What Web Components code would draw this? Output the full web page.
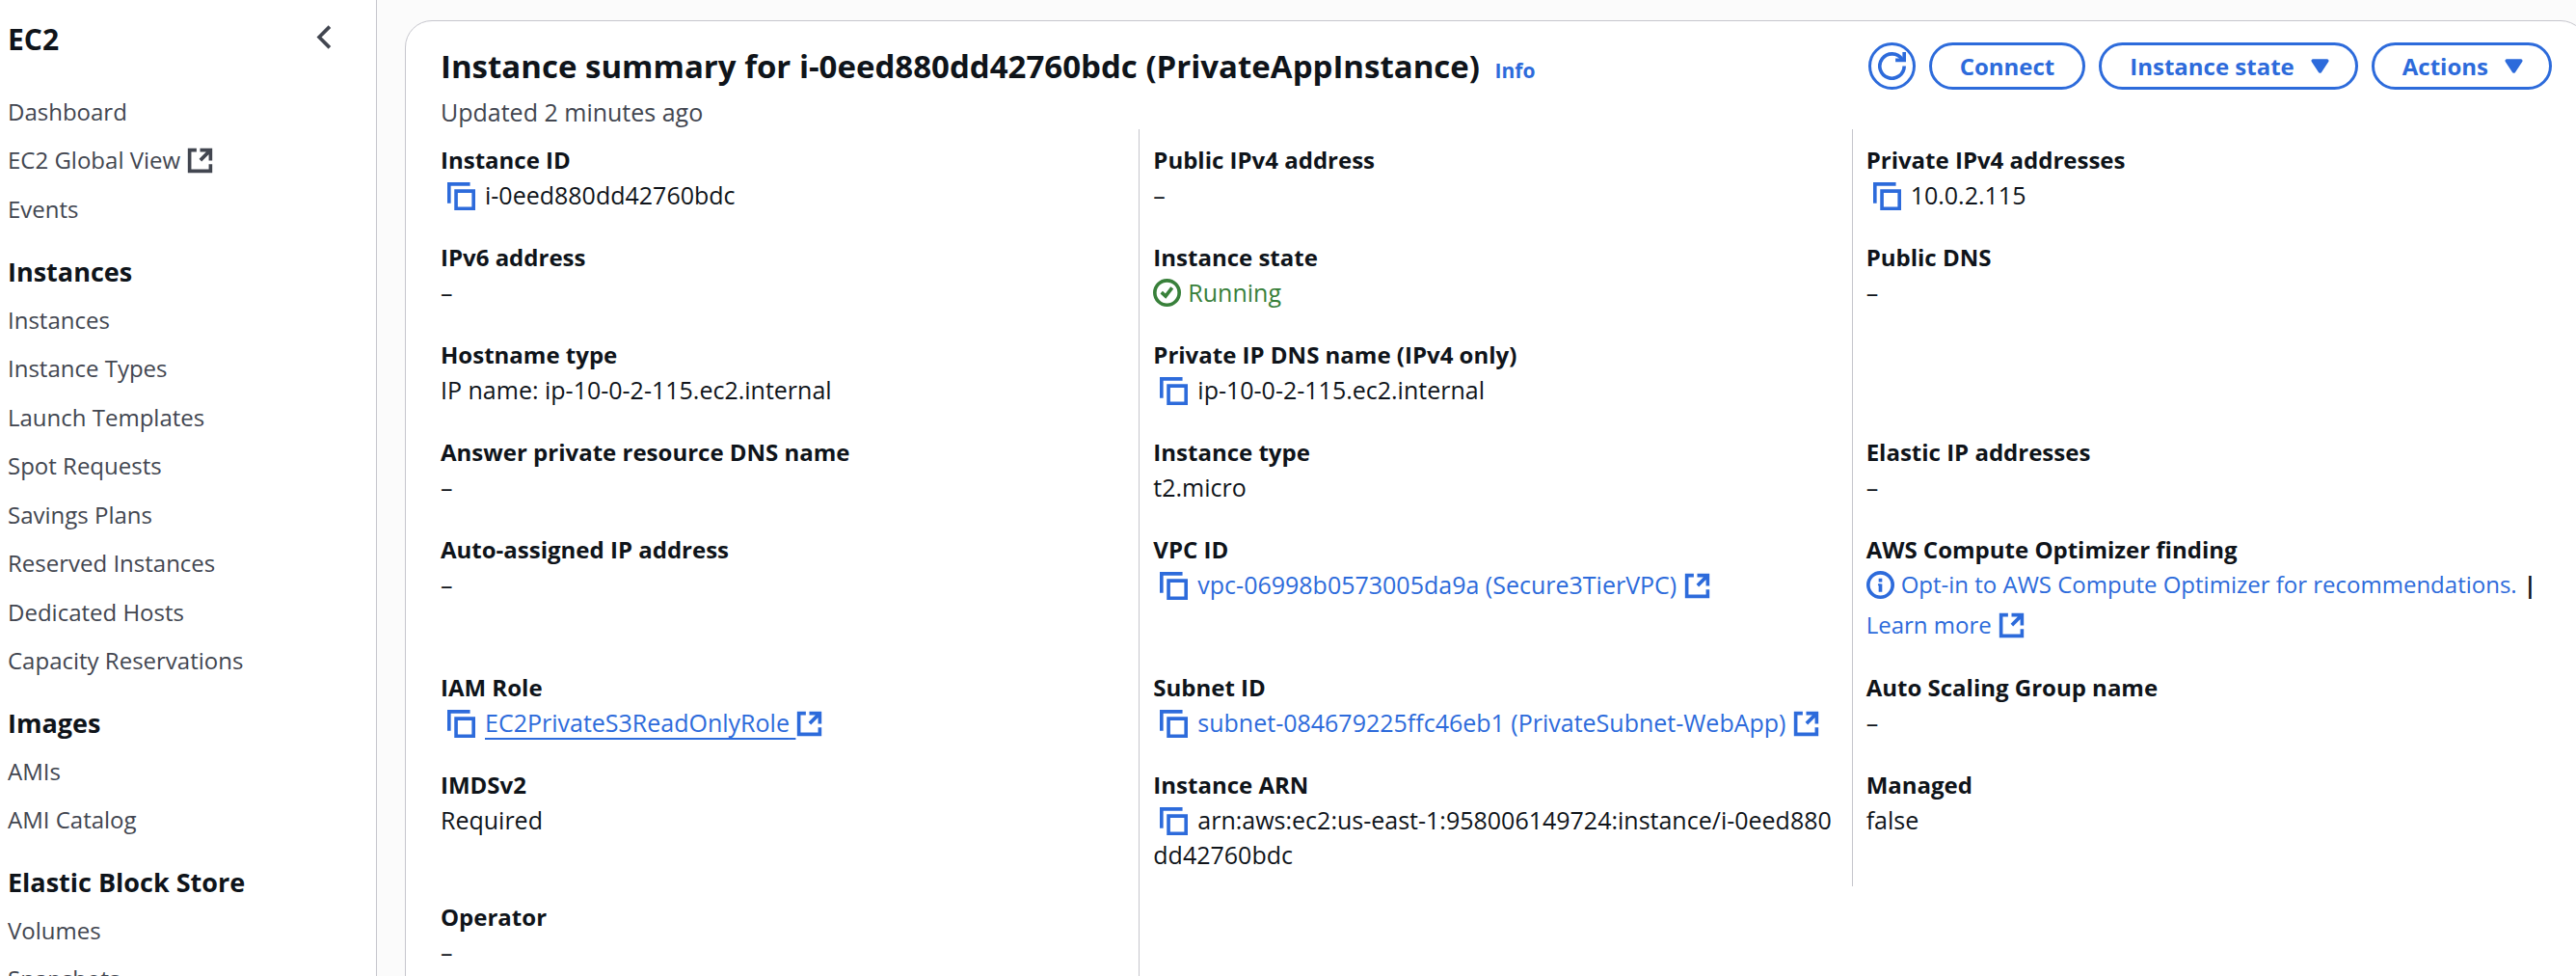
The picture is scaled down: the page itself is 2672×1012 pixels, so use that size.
<!DOCTYPE html>
<html lang="en">
<head>
<meta charset="utf-8">
<title>Instance details | EC2</title>
<style>
  :root {
    --blue: #2d6bdb;
    --green: #38803a;
    --ink: #0f141a;
    --muted: #424650;
    --line: #c6c6cd;
  }
  body {
    margin: 0;
    font: 500 24px/36px "Open Sans", "Noto Sans", sans-serif;
    color: var(--ink);
    background: #fff;
  }
</style>
</head>
<body>
<app-shell>
  <side-nav slot="nav" heading="EC2">
    <nav-section>
      <nav-link>Dashboard</nav-link>
      <nav-link external>EC2 Global View</nav-link>
      <nav-link>Events</nav-link>
    </nav-section>
    <nav-section heading="Instances">
      <nav-link>Instances</nav-link>
      <nav-link>Instance Types</nav-link>
      <nav-link>Launch Templates</nav-link>
      <nav-link>Spot Requests</nav-link>
      <nav-link>Savings Plans</nav-link>
      <nav-link>Reserved Instances</nav-link>
      <nav-link>Dedicated Hosts</nav-link>
      <nav-link>Capacity Reservations</nav-link>
    </nav-section>
    <nav-section heading="Images">
      <nav-link>AMIs</nav-link>
      <nav-link>AMI Catalog</nav-link>
    </nav-section>
    <nav-section heading="Elastic Block Store">
      <nav-link>Volumes</nav-link>
      <nav-link>Snapshots</nav-link>
    </nav-section>
  </side-nav>

  <summary-card>
    <span slot="title">Instance summary for i-0eed880dd42760bdc (PrivateAppInstance)</span>
    <span slot="description">Updated 2 minutes ago</span>
    <action-button slot="actions" round label="Refresh"><ui-icon name="refresh"></ui-icon></action-button>
    <action-button slot="actions">Connect</action-button>
    <action-button slot="actions" menu>Instance state</action-button>
    <action-button slot="actions" menu>Actions</action-button>

    <info-field label="Instance ID"><copy-button></copy-button>i-0eed880dd42760bdc</info-field>
    <info-field label="Public IPv4 address">–</info-field>
    <info-field label="Private IPv4 addresses"><copy-button></copy-button>10.0.2.115</info-field>

    <info-field label="IPv6 address">–</info-field>
    <info-field label="Instance state"><state-text>Running</state-text></info-field>
    <info-field label="Public DNS">–</info-field>

    <info-field label="Hostname type">IP name: ip-10-0-2-115.ec2.internal</info-field>
    <info-field label="Private IP DNS name (IPv4 only)"><copy-button></copy-button>ip-10-0-2-115.ec2.internal</info-field>
    <info-field></info-field>

    <info-field label="Answer private resource DNS name">–</info-field>
    <info-field label="Instance type">t2.micro</info-field>
    <info-field label="Elastic IP addresses">–</info-field>

    <info-field label="Auto-assigned IP address">–</info-field>
    <info-field label="VPC ID"><copy-button></copy-button><text-link external>vpc-06998b0573005da9a (Secure3TierVPC)</text-link></info-field>
    <info-field label="AWS Compute Optimizer finding"><optimizer-finding></optimizer-finding></info-field>

    <info-field label="IAM Role"><copy-button></copy-button><text-link external underlined>EC2PrivateS3ReadOnlyRole</text-link></info-field>
    <info-field label="Subnet ID"><copy-button></copy-button><text-link external>subnet-084679225ffc46eb1 (PrivateSubnet-WebApp)</text-link></info-field>
    <info-field label="Auto Scaling Group name">–</info-field>

    <info-field label="IMDSv2">Required</info-field>
    <info-field label="Instance ARN"><copy-button></copy-button>arn:aws:ec2:us-east-1:958006149724:instance/i-0eed880<wbr>dd42760bdc</info-field>
    <info-field label="Managed">false</info-field>

    <info-field label="Operator">–</info-field>
    <info-field></info-field>
  </summary-card>
</app-shell>

<script>
const define = (name, render) => customElements.define(name, class extends HTMLElement {
  constructor() {
    super();
    this.attachShadow({ mode: 'open' });
  }
  connectedCallback() {
    this.shadowRoot.innerHTML = render(this);
  }
});

const ICONS = {
  'angle-left': '<path d="M11 2 5 8l6 6"/>',
  external: '<path d="M6 2H2v12h12v-4M8 2h6v6M14 2 8.2 7.8"/>',
  copy: '<path d="M1 12V1h12"/><path d="M5 5h10v10H5z"/>',
  refresh: '<path d="M15 8A7 7 0 1 1 13.8 4.1"/><path d="M15 0v4.6h-5"/>',
  caret: '<path fill="currentColor" d="M4 5h8l-4 6z" stroke-linejoin="round"/>',
  check: '<circle cx="8" cy="8" r="7"/><path d="m4.8 7.8 2.4 2.2 3.7-4.8"/>',
  info: '<circle cx="8" cy="8" r="7"/><path d="M8 4.3v2M8 7.4V12"/><path stroke-width="1" d="M6.6 7.9H8"/>'
};

define('ui-icon', el => `
  <style>
    :host { display: inline-block; flex: none; width: 29px; height: 29px; vertical-align: -6px; line-height: 0; }
    svg { width: 100%; height: 100%; fill: none; stroke: currentColor; stroke-width: 2; }
  </style>
  <svg viewBox="0 0 16 16" aria-hidden="true">${ICONS[el.getAttribute('name')]}</svg>`);

define('app-shell', () => `
  <style>
    :host { display: flex; height: 100vh; overflow: hidden; }
    aside { flex: 0 0 390px; border-right: 1px solid var(--line); background: #fff; }
    main { flex: 1; min-width: 0; padding: 21px 0 0 29px; margin-right: -12px; background: #fbfbfb; }
  </style>
  <aside><slot name="nav"></slot></aside>
  <main><slot></slot></main>`);

define('side-nav', el => `
  <style>
    :host { display: block; padding: 20px 39px 0 8px; }
    header { display: flex; justify-content: space-between; align-items: flex-start; height: 78px; }
    h2 { margin: 0; font-size: 30px; line-height: 42px; font-weight: 700; }
    button { display: flex; margin: 4px 0 0; padding: 0; border: 0; background: none; color: var(--muted); }
    nav { display: flex; flex-direction: column; gap: 29px; }
  </style>
  <header><h2>${el.getAttribute('heading')}</h2>
    <button type="button" aria-label="Close navigation"><ui-icon name="angle-left"></ui-icon></button></header>
  <nav><slot></slot></nav>`);

define('nav-section', el => `
  <style>
    :host { display: block; }
    h3 { margin: 0 0 14px; font-size: 27px; line-height: 36px; font-weight: 700; }
    ::slotted(*) { margin-bottom: 14px; }
    ::slotted(:nth-child(even)) { margin-bottom: 15px; }
    ::slotted(:last-child) { margin-bottom: 0; }
  </style>
  ${el.hasAttribute('heading') ? `<h3>${el.getAttribute('heading')}</h3>` : ''}<slot></slot>`);

define('nav-link', el => `
  <style>
    :host { display: block; }
    a { color: var(--muted); text-decoration: none; white-space: nowrap; }
  </style>
  <a href="#"><slot></slot>${el.hasAttribute('external') ? ' <ui-icon name="external"></ui-icon>' : ''}</a>`);

define('text-link', el => `<style>
    :host { display: inline; white-space: nowrap; }
    a { color: var(--blue); text-decoration: none; }
    :host([underlined]) span { text-decoration: underline 2px; text-underline-offset: 6px; text-decoration-skip-ink: none; white-space: pre; }
  </style><a href="#"><span><slot></slot>${el.hasAttribute('external') ? ' </span><ui-icon name="external"></ui-icon>' : '</span>'}</a>`);

define('copy-button', () => `<style>
    :host { display: inline; }
    button { display: inline-block; width: 29px; height: 29px; margin: 0 10px 0 7px; padding: 0; border: 0;
             background: none; color: var(--blue); vertical-align: -6px; line-height: 0; }
    ui-icon { display: block; }
  </style><button type="button" aria-label="Copy"><ui-icon name="copy"></ui-icon></button>`);

define('state-text', () => `
  <style>
    :host { display: flex; align-items: center; gap: 7px; color: var(--green); }
  </style>
  <ui-icon name="check"></ui-icon><slot></slot>`);

define('optimizer-finding', () => `
  <style>
    :host { display: flex; flex-direction: column; gap: 6px; font-size: 24px; white-space: nowrap; }
    div { display: flex; align-items: center; gap: 7px; }
    ui-icon { color: var(--blue); }
    .divider { font-weight: 700; }
  </style>
  <div><ui-icon name="info"></ui-icon><text-link>Opt-in to AWS Compute Optimizer for recommendations.</text-link><span class="divider">|</span></div>
  <div><text-link external>Learn more</text-link></div>`);

define('action-button', el => `
  <style>
    :host { display: block; }
    button { display: flex; align-items: center; gap: 12px; height: 49px; padding: 0 29px; border: 3px solid var(--blue);
             border-radius: 25px; background: #fff; color: var(--blue); font: inherit; font-weight: 700; white-space: nowrap; }
    :host([round]) button { width: 49px; padding: 0; justify-content: center; }
    :host([menu]) button { padding-right: 22px; }
  </style>
  <button type="button"${el.hasAttribute('label') ? ` aria-label="${el.getAttribute('label')}"` : ''}><slot></slot>${
    el.hasAttribute('menu') ? '<ui-icon name="caret"></ui-icon>' : ''}</button>`);

define('info-field', el => `
  <style>
    :host { display: block; min-width: 0; padding: 14px 15px 15px 14px; border-left: 1px solid var(--line); overflow-wrap: anywhere; }
    :host(:nth-of-type(3n+1)) { border-left-color: transparent; }
    .label { font-weight: 700; }
    .value { font-size: 25px; }
  </style>
  ${el.hasAttribute('label') ? `<div class="label">${el.getAttribute('label')}</div><div class="value"><slot></slot></div>` : ''}`);

define('summary-card', () => `
  <style>
    :host { display: block; min-height: 1200px; padding: 22px 36px 0; border: 1px solid var(--line); border-radius: 28px; background: #fff; }
    header { display: flex; justify-content: space-between; align-items: flex-start; }
    h1 { margin: 0; font-size: 33px; line-height: 50px; font-weight: 700; }
    h1 a { margin-left: 7px; font-size: 21px; line-height: 36px; color: var(--blue); text-decoration: none; }
    p { margin: 4px 0 0; font-size: 25px; color: var(--muted); }
    .actions { display: flex; gap: 14px; }
    .fields { display: grid; grid-template-columns: repeat(3, minmax(0, 1fr)); margin: 0 -13px 0 -15px; }
  </style>
  <header>
    <div><h1><slot name="title"></slot> <a href="#">Info</a></h1><p><slot name="description"></slot></p></div>
    <div class="actions"><slot name="actions"></slot></div>
  </header>
  <div class="fields"><slot></slot></div>`);
</script>
</body>
</html>
